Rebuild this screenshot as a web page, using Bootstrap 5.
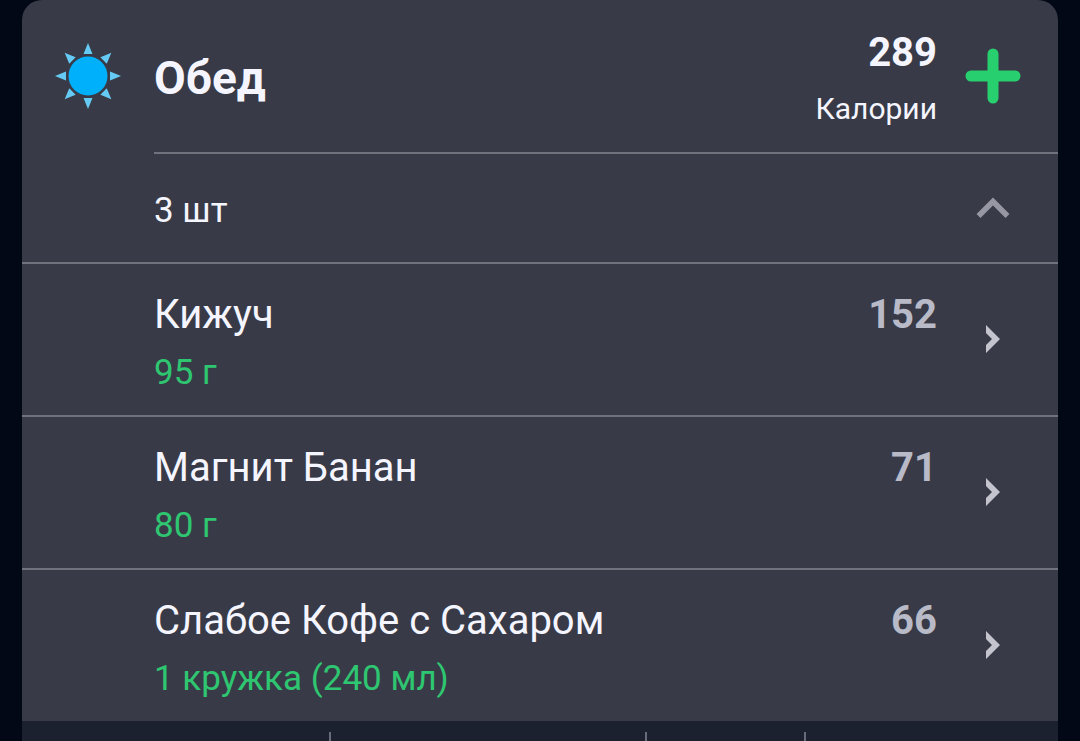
<!DOCTYPE html>
<html lang="ru">
<head>
<meta charset="utf-8">
<meta name="viewport" content="width=device-width, initial-scale=1">
<title>Обед</title>
<link href="https://cdn.jsdelivr.net/npm/bootstrap@5.3.0/dist/css/bootstrap.min.css" rel="stylesheet">
<style>
  body { background: #020815; color: #f5f5ff; font-family: Roboto, "Noto Sans", sans-serif; }
  .page { padding: 0 22px; }
  .meal { background: #383b47; border-radius: 20px 20px 0 0; overflow: hidden; }
  .line { border-bottom: 2px solid #70737e; }
  .gutter { flex: 0 0 132px; }
  .action { flex: 0 0 121px; padding: 0 10px 0 0; color: #c3c4ce; background: none; border: 0; }
  .meal-head .line { height: 154px; }
  .meal-head .gutter { padding-bottom: 3px; }
  .meal-title { font-size: 46px; line-height: 56px; font-weight: 700; padding-top: 4px; }
  .totals { padding-top: 4px; }
  .kcal { font-size: 40px; line-height: 48px; font-weight: 700; }
  .kcal-label { font-size: 30px; line-height: 36px; margin-top: 14px; }
  .count-row { min-height: 110px; }
  .count-text { font-size: 35px; line-height: 40px; padding-top: 6px; }
  .food { color: inherit; text-decoration: none; min-height: 153px; }
  .food-name { font-size: 40px; line-height: 48px; }
  .food-amount { font-size: 35px; line-height: 40px; margin-top: 14px; color: #2fc671; }
  .food .kcal { color: #b9bac8; }
  .food .action { padding-bottom: 1px; }
  .food-body { padding-top: 27px; }
  .food:last-child { border-bottom: 0; min-height: 151px; }
  .strip { background: #1b212e; height: 20px; padding-top: 11px; }
  .strip div { border-right: 2px solid #686c79; }
  .strip div:last-child { border: 0; }
  .w-a { flex: 309; } .w-b { flex: 316; } .w-c { flex: 158; } .w-d { flex: 253; }
</style>
</head>
<body>
<main class="page">
  <section class="meal">
    <header class="meal-head d-flex">
      <div class="gutter d-flex justify-content-center align-items-center">
        <svg width="66" height="66" viewBox="-33 -33 66 66" aria-hidden="true">
          <circle r="19.5" fill="#00b0fa"/>
          <g fill="#66cbf4">
            <path id="ray" d="M0-33 4.500-22H-4.500Z"/>
            <use href="#ray" transform="rotate(45)"/><use href="#ray" transform="rotate(90)"/>
            <use href="#ray" transform="rotate(135)"/><use href="#ray" transform="rotate(180)"/>
            <use href="#ray" transform="rotate(225)"/><use href="#ray" transform="rotate(270)"/>
            <use href="#ray" transform="rotate(315)"/>
          </g>
        </svg>
      </div>
      <div class="line d-flex align-items-center flex-grow-1">
        <h1 class="meal-title flex-grow-1 mb-0">Обед</h1>
        <div class="totals text-end">
          <div class="kcal">289</div>
          <div class="kcal-label">Калории</div>
        </div>
        <button class="action d-flex justify-content-center" type="button" aria-label="Добавить">
          <svg width="56" height="56" viewBox="0 0 56 56"><path d="M28 6V50M6 28H50" stroke="#28cf6f" stroke-width="11" stroke-linecap="round"/></svg>
        </button>
      </div>
    </header>
    <div class="count-row line d-flex align-items-center">
      <div class="gutter"></div>
      <div class="count-text flex-grow-1">3 шт</div>
      <button class="action d-flex justify-content-center" type="button" aria-label="Свернуть">
        <svg width="34" height="22" viewBox="0 0 34 22"><path d="M2.500 19 17 4.500 31.500 19" fill="none" stroke="#9697a2" stroke-width="5.500"/></svg>
      </button>
    </div>
    <a class="food line d-flex" href="#">
      <div class="gutter"></div>
      <div class="food-body flex-grow-1"><div class="food-name">Кижуч</div><div class="food-amount">95 г</div></div>
      <div class="food-body kcal">152</div>
      <div class="action d-flex justify-content-center align-items-center">
        <svg width="16" height="28" viewBox="0 0 16 28"><path d="M1 0 15 14 1 28V20L7 14 1 8Z" fill="currentColor"/></svg>
      </div>
    </a>
    <a class="food line d-flex" href="#">
      <div class="gutter"></div>
      <div class="food-body flex-grow-1"><div class="food-name">Магнит Банан</div><div class="food-amount">80 г</div></div>
      <div class="food-body kcal">71</div>
      <div class="action d-flex justify-content-center align-items-center">
        <svg width="16" height="28" viewBox="0 0 16 28"><path d="M1 0 15 14 1 28V20L7 14 1 8Z" fill="currentColor"/></svg>
      </div>
    </a>
    <a class="food line d-flex" href="#">
      <div class="gutter"></div>
      <div class="food-body flex-grow-1"><div class="food-name">Слабое Кофе с Сахаром</div><div class="food-amount">1 кружка (240 мл)</div></div>
      <div class="food-body kcal">66</div>
      <div class="action d-flex justify-content-center align-items-center">
        <svg width="16" height="28" viewBox="0 0 16 28"><path d="M1 0 15 14 1 28V20L7 14 1 8Z" fill="currentColor"/></svg>
      </div>
    </a>
  </section>
  <div class="strip d-flex"><div class="w-a"></div><div class="w-b"></div><div class="w-c"></div><div class="w-d"></div></div>
</main>
<script src="https://cdn.jsdelivr.net/npm/bootstrap@5.3.0/dist/js/bootstrap.bundle.min.js"></script>
</body>
</html>
